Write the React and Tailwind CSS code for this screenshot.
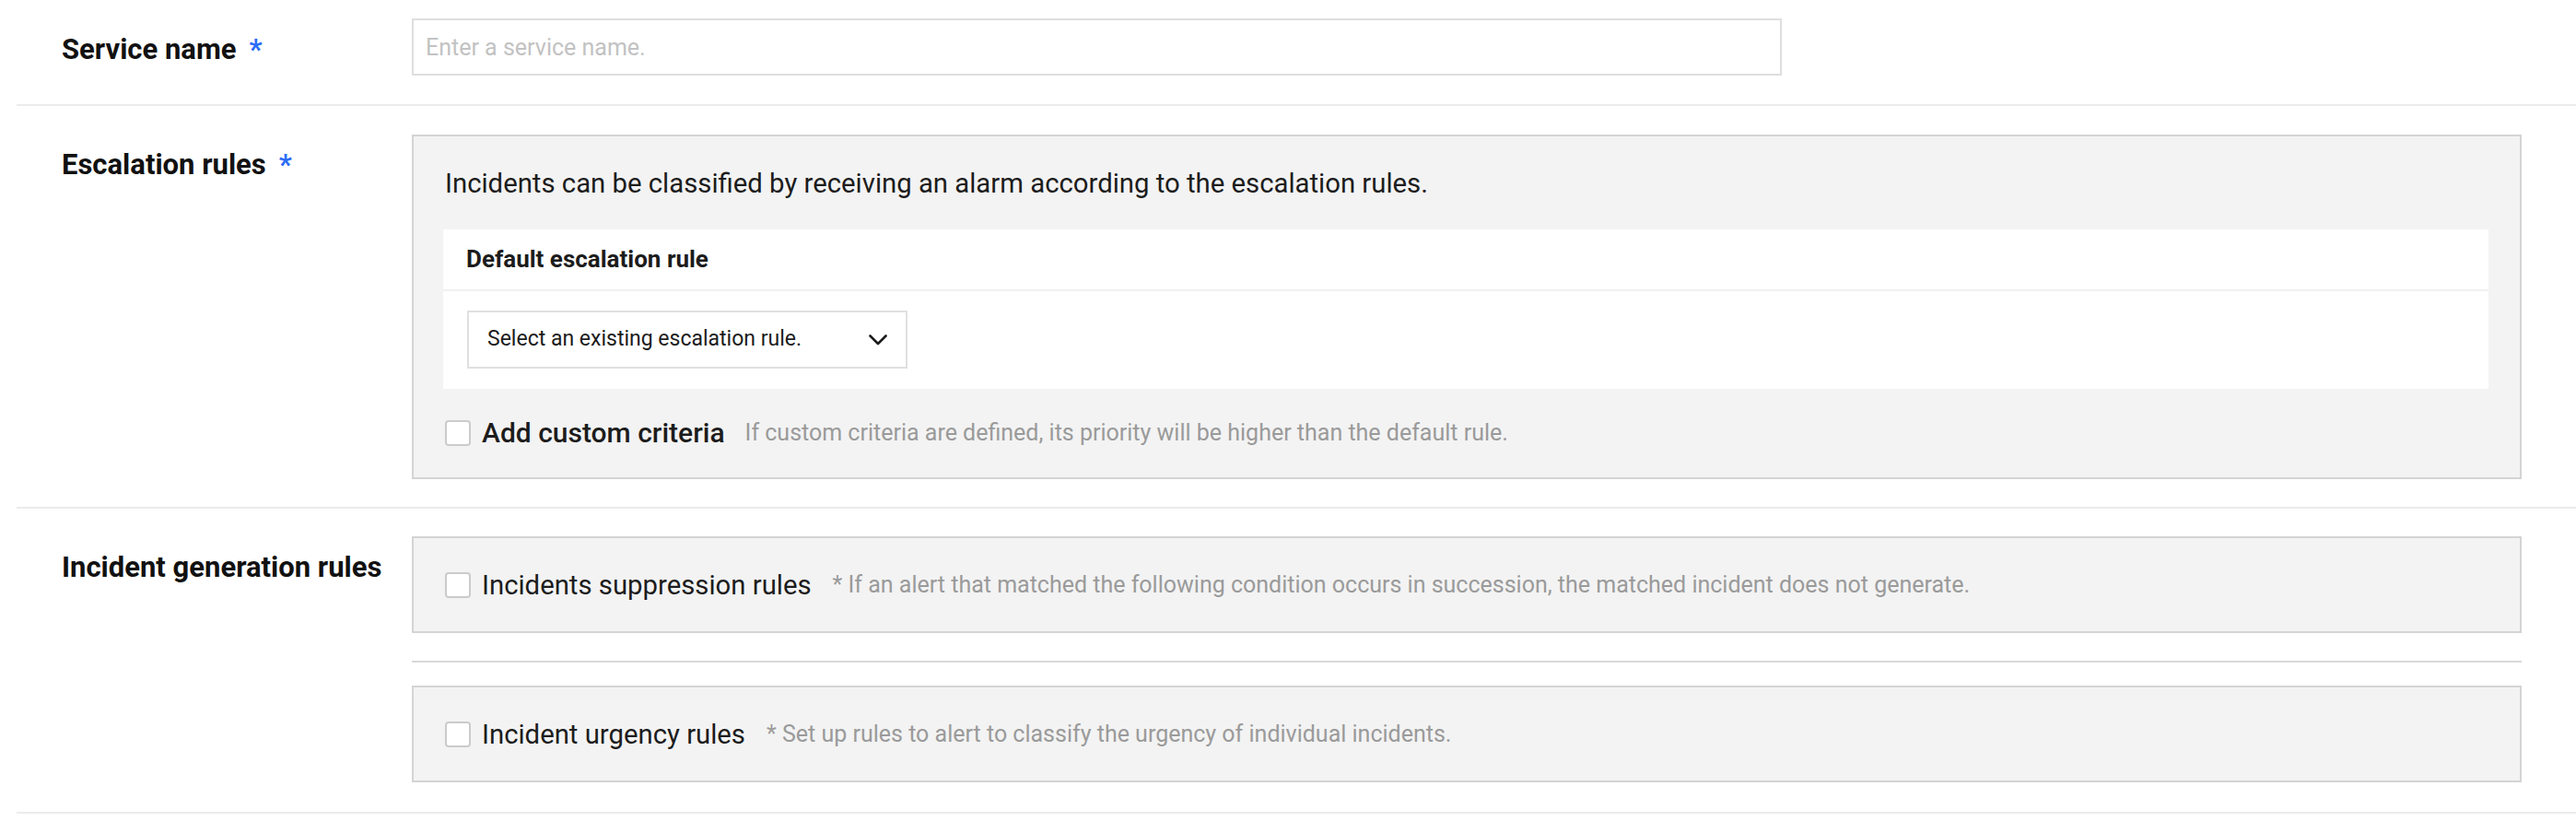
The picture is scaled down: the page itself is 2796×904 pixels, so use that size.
import React from "react";

function Required() {
  return <span className="ml-[14px] text-[#2b6cf6]">*</span>;
}

function Checkbox() {
  return (
    <span className="inline-block h-[28px] w-[28px] shrink-0 rounded-[4px] border-2 border-[#cbcbcb] bg-white" />
  );
}

function ChevronDown() {
  return (
    <svg width="20" height="12" viewBox="0 0 20 12" fill="none">
      <polyline points="1.5,1.5 10,10 18.5,1.5" stroke="#1c1c1c" strokeWidth="2.6" strokeLinecap="round" strokeLinejoin="round" />
    </svg>
  );
}

function RuleBox({ title, hint }) {
  return (
    <div className="flex h-[105px] items-center gap-[12px] border-2 border-[#d4d4d4] bg-[#f3f3f3] px-[34px]">
      <Checkbox />
      <span className="text-[29.3px] leading-[36px] text-[#1c1c1c]">{title}</span>
      <span className="ml-[11px] text-[25px] leading-[36px] text-[#9a9a9a]">{hint}</span>
    </div>
  );
}

export default function App() {
  return (
    <div className="min-h-screen bg-white pl-[18px] font-['Roboto',sans-serif] text-[#1c1c1c]">
      {/* Service name */}
      <div className="flex items-center border-b-2 border-[#ebebeb] pt-[20px] pb-[31px]">
        <div className="w-[429px] pt-[5px] pl-[49px] text-[31px] font-bold leading-[40px] text-[#111]">
          Service name
          <Required />
        </div>
        <input
          className="h-[62px] w-[1487px] border-2 border-[#dedede] bg-white px-[13px] text-[25px] outline-none placeholder:text-[#c2c2c2]"
          placeholder="Enter a service name."
        />
      </div>

      {/* Escalation rules */}
      <div className="flex items-start border-b-2 border-[#ebebeb] pt-[31px] pr-[59px] pb-[30px]">
        <div className="w-[429px] pt-[13px] pl-[49px] text-[31px] font-bold leading-[40px] text-[#111]">
          Escalation rules
          <Required />
        </div>
        <div className="flex-1 border-2 border-[#d4d4d4] bg-[#f3f3f3] px-[32px] pt-[33px] pb-[30px]">
          <p className="pl-[2px] text-[29.3px] leading-[36px]">
            Incidents can be classified by receiving an alarm according to the escalation rules.
          </p>
          <div className="mt-[32px] mr-[2px] bg-white">
            <div className="flex h-[67px] items-center border-b-2 border-[#f0f0f0] px-[25px] text-[26px] font-bold">
              Default escalation rule
            </div>
            <div className="px-[26px] pt-[21px] pb-[22px]">
              <div className="flex h-[63px] w-[478px] items-center justify-between border-2 border-[#e0e0e0] px-[20px] text-[23px]">
                <span>Select an existing escalation rule.</span>
                <ChevronDown />
              </div>
            </div>
          </div>
          <div className="mt-[30px] flex h-[36px] items-center gap-[12px] pl-[2px]">
            <Checkbox />
            <span className="text-[30px] font-medium leading-[36px]">Add custom criteria</span>
            <span className="ml-[10px] text-[25px] leading-[36px] text-[#9a9a9a]">
              If custom criteria are defined, its priority will be higher than the default rule.
            </span>
          </div>
        </div>
      </div>

      {/* Incident generation rules */}
      <div className="flex items-start border-b-2 border-[#ebebeb] pt-[30px] pr-[59px] pb-[32px]">
        <div className="w-[429px] pt-[14px] pl-[49px] text-[31px] font-bold leading-[40px] text-[#111]">
          Incident generation rules
        </div>
        <div className="flex-1">
          <RuleBox
            title="Incidents suppression rules"
            hint="* If an alert that matched the following condition occurs in succession, the matched incident does not generate."
          />
          <div className="mt-[30px] mb-[25px] h-[2px] bg-[#d9d9d9]" />
          <RuleBox
            title="Incident urgency rules"
            hint="* Set up rules to alert to classify the urgency of individual incidents."
          />
        </div>
      </div>
    </div>
  );
}
